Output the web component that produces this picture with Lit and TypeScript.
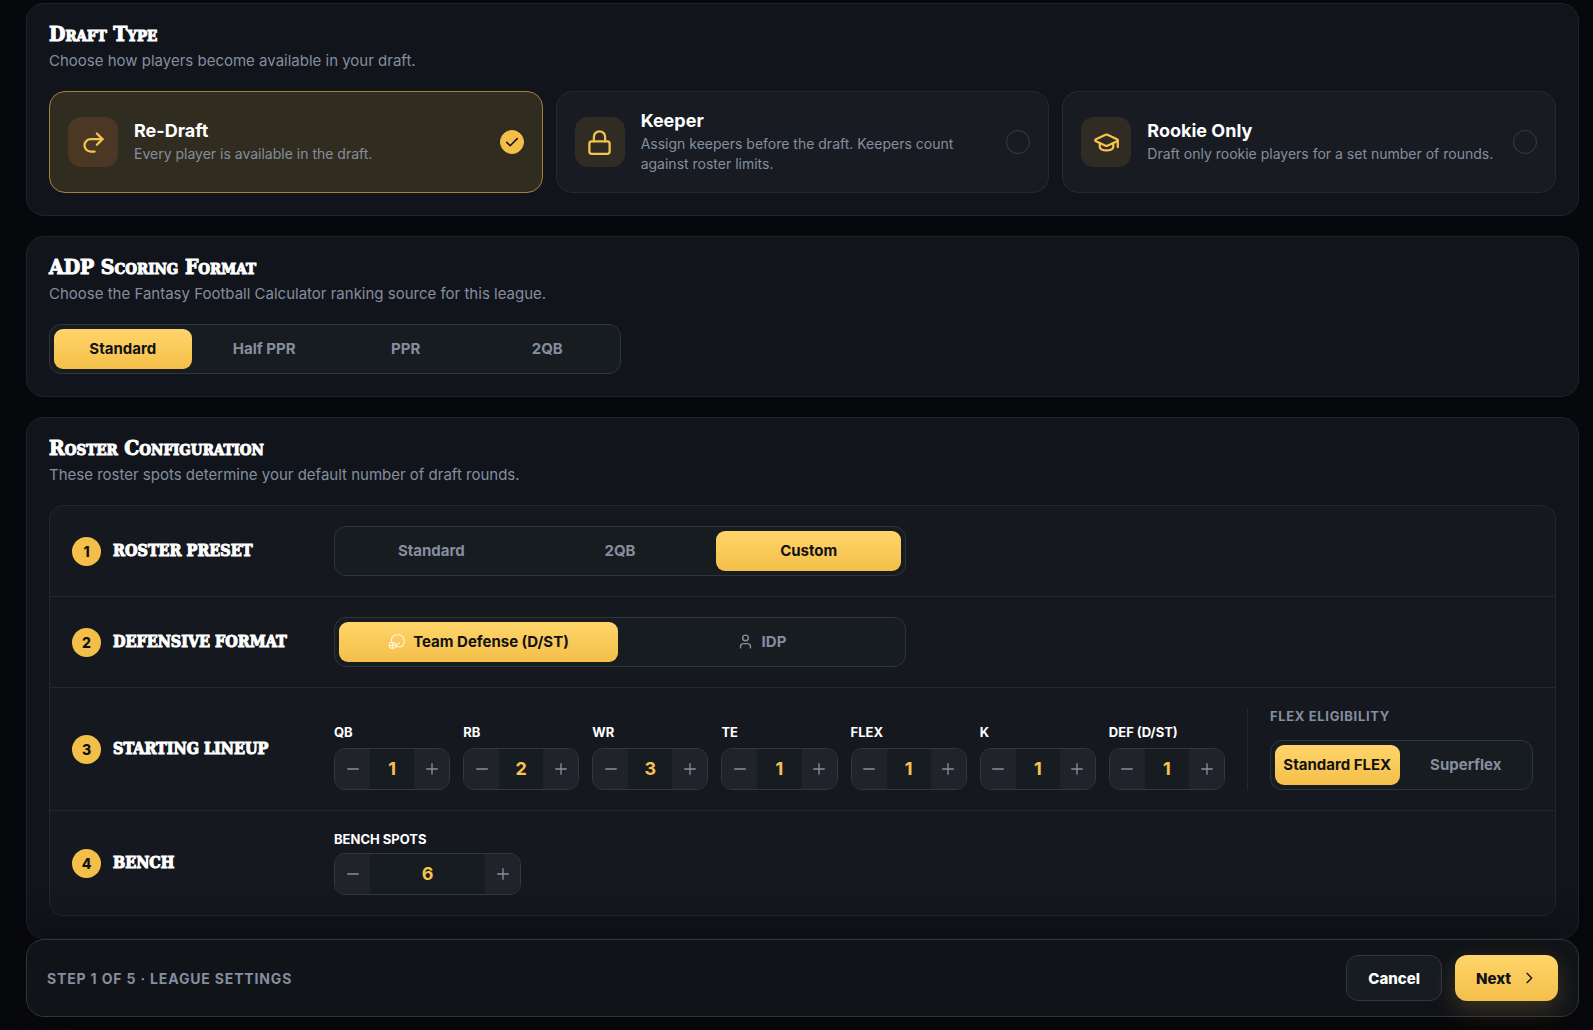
import { LitElement, html, svg, css } from "lit";
import { customElement, property, state } from "lit/decorators.js";
import { classMap } from "lit/directives/class-map.js";

const icons = {
  redo: svg`<path d="m15 14 5-5-5-5"/><path d="M20 9H9.5A5.5 5.5 0 0 0 4 14.5 5.5 5.5 0 0 0 9.5 20H13"/>`,
  lock: svg`<rect x="3" y="11" width="18" height="11" rx="2"/><path d="M7 11V7a5 5 0 0 1 10 0v4"/>`,
  cap: svg`<path d="M21.42 10.922a1 1 0 0 0-.019-1.838L12.83 5.18a2 2 0 0 0-1.66 0L2.6 9.08a1 1 0 0 0 0 1.832l8.57 3.908a2 2 0 0 0 1.66 0z"/><path d="M22 10v6"/><path d="M6 12.5V16a6 3 0 0 0 12 0v-3.5"/>`,
  check: svg`<path d="m5 12.5 4.5 4.5L19 7.5"/>`,
  user: svg`<path d="M19 21v-2a4 4 0 0 0-4-4H9a4 4 0 0 0-4 4v2"/><circle cx="12" cy="7" r="4"/>`,
  helmet: svg`<path d="M5 13C3.500 6.500 8 2 13.500 2 19 2 23 6 23 11c0 4-1.500 6.500-4 8.500h-5L11.500 15 5 13z"/><path d="M5 13 2 14.500V20l3.500 2 5.500-1.500 2-2.500"/><path d="M2 17.500h9.500"/><path d="M6.500 14v7.500"/><circle cx="15.500" cy="14.500" r=".8"/>`,
  chevron: svg`<path d="m9 5 7 7-7 7"/>`,
  minus: svg`<path d="M4 12h16"/>`,
  plus: svg`<path d="M4 12h16M12 4v16"/>`,
};
type IconName = keyof typeof icons;

const icon = (name: IconName, cls: string) =>
  html`<svg class=${cls} viewBox="0 0 24 24" fill="none" stroke="currentColor"
    stroke-linecap="round" stroke-linejoin="round" aria-hidden="true">${icons[name]}</svg>`;

interface Choice {
  label: string;
  icon?: IconName;
}

const reset = css`
  *, *::before, *::after { box-sizing: border-box; }
  button, input { font: inherit; color: inherit; margin: 0; }
  button { cursor: pointer; }
`;

@customElement("segmented-control")
class SegmentedControl extends LitElement {
  @property() label = "";
  @property({ attribute: false }) choices: Choice[] = [];
  @property({ type: Number }) selected = 0;

  static styles = [reset, css`
    :host { display: block; }
    .track {
      display: grid;
      grid-auto-flow: column;
      grid-auto-columns: minmax(0, 1fr);
      gap: 4px;
      padding: 4px;
      border: 1px solid #313539;
      border-radius: 12px;
      background: #171c21;
    }
    .segment {
      display: flex;
      align-items: center;
      justify-content: center;
      gap: 8px;
      height: 40px;
      padding: 0 0 2px;
      border: 0;
      border-radius: 9px;
      background: none;
      color: #858e9e;
      font-size: 15px;
      font-weight: 700;
      white-space: nowrap;
    }
    .selected {
      background: linear-gradient(#ffd56a, #f4bf49);
      color: #111216;
    }
    .glyph { width: 17px; height: 17px; stroke-width: 2; }
    .selected .glyph { color: #fff6dc; stroke-width: 1.5; }
  `];

  render() {
    return html`<div class="track" role="group" aria-label=${this.label}>
      ${this.choices.map((c, i) => html`
        <button type="button" class=${classMap({ segment: true, selected: i === this.selected })}
          aria-pressed=${i === this.selected ? "true" : "false"}
          @click=${() => (this.selected = i)}>${c.icon ? icon(c.icon, "glyph") : null}${c.label}</button>`)}
    </div>`;
  }
}

@customElement("number-stepper")
class NumberStepper extends LitElement {
  @property() label = "";
  @property({ type: Number }) value = 0;
  @property({ type: Boolean, reflect: true }) compact = false;

  static styles = [reset, css`
    :host { display: flex; flex-direction: column; gap: 8px; }
    :host([compact]) { gap: 6px; }
    .name {
      color: #fff;
      font-size: 13px;
      line-height: 16px;
      font-weight: 700;
      white-space: nowrap;
    }
    .box {
      display: grid;
      grid-template-columns: 35px minmax(0, 1fr) 35px;
      height: 42px;
      overflow: hidden;
      border: 1px solid #33373b;
      border-radius: 11px;
      background: #171c21;
    }
    .step {
      display: grid;
      place-items: center;
      padding: 0;
      border: 0;
      background: #20242a;
      color: #858e9e;
    }
    .sign { width: 16px; height: 16px; stroke-width: 2; }
    .value {
      width: 100%;
      padding: 0 0 2px;
      border: 0;
      background: none;
      color: #f6c34d;
      font-size: 18px;
      font-weight: 700;
      text-align: center;
    }
  `];

  private change(by: number) {
    this.value = Math.max(0, this.value + by);
  }

  render() {
    return html`
      <label class="name" for="value">${this.label}</label>
      <div class="box">
        <button class="step" type="button" aria-label="Decrease ${this.label}" @click=${() => this.change(-1)}>${icon("minus", "sign")}</button>
        <input class="value" id="value" type="text" inputmode="numeric" .value=${String(this.value)} />
        <button class="step" type="button" aria-label="Increase ${this.label}" @click=${() => this.change(1)}>${icon("plus", "sign")}</button>
      </div>`;
  }
}

const draftTypes: { title: string; text: string; icon: IconName }[] = [
  { title: "Re-Draft", text: "Every player is available in the draft.", icon: "redo" },
  { title: "Keeper", text: "Assign keepers before the draft. Keepers count against roster limits.", icon: "lock" },
  { title: "Rookie Only", text: "Draft only rookie players for a set number of rounds.", icon: "cap" },
];

const lineup: [string, number][] = [
  ["QB", 1], ["RB", 2], ["WR", 3], ["TE", 1], ["FLEX", 1], ["K", 1], ["DEF (D/ST)", 1],
];

const scoring: Choice[] = [{ label: "Standard" }, { label: "Half PPR" }, { label: "PPR" }, { label: "2QB" }];
const presets: Choice[] = [{ label: "Standard" }, { label: "2QB" }, { label: "Custom" }];
const defenses: Choice[] = [{ label: "Team Defense (D/ST)", icon: "helmet" }, { label: "IDP", icon: "user" }];
const flexRules: Choice[] = [{ label: "Standard FLEX" }, { label: "Superflex" }];

@customElement("app-root")
class AppRoot extends LitElement {
  @state() private draftType = 0;

  static styles = [reset, css`
    :host {
      display: block;
      min-height: 100vh;
      background: #07080c;
      color: #fff;
      font-family: Inter, "Liberation Sans", sans-serif;
    }
    .page { padding: 3px 14px 13px 26px; }
    .sections { display: flex; flex-direction: column; gap: 20px; }
    .card {
      padding: 20px 22px 22px;
      border: 1px solid #20242a;
      border-radius: 18px;
      background: #11141b;
    }
    .title {
      margin: 0;
      font-family: "DejaVu Serif Condensed", "DejaVu Serif", serif;
      font-size: 21px;
      line-height: 20px;
      font-weight: 700;
      font-variant: small-caps;
      -webkit-text-stroke: 1px currentColor;
    }
    .subtitle {
      margin: 6px 0 19px;
      color: #858e9e;
      font-size: 15px;
      line-height: 22px;
    }
    .options {
      display: grid;
      grid-template-columns: repeat(3, minmax(0, 1fr));
      gap: 13px;
      margin: 0;
      padding: 0;
      border: 0;
    }
    .option {
      display: flex;
      align-items: center;
      gap: 16px;
      padding: 18px;
      border: 1px solid #252a2f;
      border-radius: 16px;
      background: #181c22;
      cursor: pointer;
    }
    .option.chosen { border-color: #a5823a; background: #312c20; }
    .tile {
      flex: none;
      display: grid;
      place-items: center;
      width: 50px;
      height: 50px;
      border-radius: 13px;
      background: #302c24;
      color: #f6c34d;
    }
    .chosen .tile { background: #4b3824; }
    .tile-icon { width: 27px; height: 27px; stroke-width: 2; }
    .option-text { flex: 1; min-width: 0; display: flex; flex-direction: column; gap: 2px; }
    .option-title { font-size: 18px; line-height: 22px; font-weight: 700; }
    .option-note { color: #858e9e; font-size: 14px; line-height: 20px; }
    .mark { flex: none; display: grid; place-items: center; }
    .radio {
      grid-area: 1 / 1;
      appearance: none;
      width: 24px;
      height: 24px;
      border: 1px solid #3a3e43;
      border-radius: 50%;
    }
    .radio:checked { border-color: #f4bf49; background: #f4bf49; }
    .tick { grid-area: 1 / 1; width: 18px; height: 18px; stroke-width: 2; color: #111216; pointer-events: none; }
    .limited { max-width: 572px; }
    .panel {
      border: 1px solid #24282d;
      border-radius: 14px;
      background: #15181f;
    }
    .row {
      display: grid;
      grid-template-columns: 240px minmax(0, 1fr);
      align-items: center;
      gap: 22px;
      padding: 20px 22px;
    }
    .row + .row { border-top: 1px solid #24282d; }
    .row-head { display: flex; align-items: center; gap: 12px; }
    .number {
      flex: none;
      display: grid;
      place-items: center;
      width: 29px;
      height: 29px;
      border-radius: 50%;
      background: #f4bf49;
      color: #111216;
      font-size: 14px;
      font-weight: 800;
    }
    .row-title {
      margin: 0;
      font-family: "DejaVu Serif Condensed", "DejaVu Serif", serif;
      font-size: 16px;
      line-height: 20px;
      font-weight: 700;
      text-transform: uppercase;
      white-space: nowrap;
      -webkit-text-stroke: 1px currentColor;
    }
    .lineup { display: flex; align-items: flex-end; gap: 22px; }
    .steppers { flex: 1; display: grid; grid-template-columns: repeat(7, minmax(0, 1fr)); gap: 13px; }
    .flex-rules {
      flex: none;
      display: flex;
      flex-direction: column;
      gap: 16px;
      width: 286px;
      padding-left: 22px;
      border-left: 1px solid #24282d;
    }
    .caption {
      color: #858e9e;
      font-size: 13px;
      line-height: 16px;
      font-weight: 700;
      letter-spacing: 0.05em;
      text-transform: uppercase;
    }
    .bench { width: 187px; }
    .footer {
      position: relative;
      display: flex;
      align-items: center;
      gap: 13px;
      padding: 15px 20px;
      border: 1px solid #303438;
      border-radius: 18px;
      background: #101318;
      box-shadow: 0 0 40px rgba(10, 10, 10, 0.9);
    }
    .step-label {
      flex: 1;
      color: #858e9e;
      font-size: 14px;
      font-weight: 700;
      letter-spacing: 0.06em;
      text-transform: uppercase;
    }
    .action {
      display: flex;
      align-items: center;
      gap: 10px;
      height: 46px;
      padding: 0 21px;
      border: 1px solid #33373b;
      border-radius: 12px;
      background: #171b22;
      font-size: 15px;
      font-weight: 800;
    }
    .primary {
      border: 0;
      background: linear-gradient(#ffd56a, #f4bf49);
      color: #111216;
      box-shadow: 0 8px 24px rgba(244, 191, 73, 0.2);
    }
    .next-icon { width: 16px; height: 16px; stroke-width: 2; }
  `];

  private row(n: number, title: string, body: unknown) {
    return html`<div class="row">
      <div class="row-head"><span class="number">${n}</span><h3 class="row-title">${title}</h3></div>
      ${body}
    </div>`;
  }

  private heading(title: string, note: string) {
    return html`<h2 class="title">${title}</h2><p class="subtitle">${note}</p>`;
  }

  render() {
    return html`<main class="page">
      <div class="sections">
        <section class="card">
          ${this.heading("Draft Type", "Choose how players become available in your draft.")}
          <fieldset class="options" aria-label="Draft Type">
            ${draftTypes.map((t, i) => html`
              <label class=${classMap({ option: true, chosen: i === this.draftType })}>
                <span class="tile">${icon(t.icon, "tile-icon")}</span>
                <span class="option-text">
                  <span class="option-title">${t.title}</span>
                  <span class="option-note">${t.text}</span>
                </span>
                <span class="mark">
                  <input class="radio" type="radio" name="draft-type" .checked=${i === this.draftType}
                    @change=${() => (this.draftType = i)} />
                  ${i === this.draftType ? icon("check", "tick") : null}
                </span>
              </label>`)}
          </fieldset>
        </section>

        <section class="card">
          ${this.heading("ADP Scoring Format", "Choose the Fantasy Football Calculator ranking source for this league.")}
          <segmented-control class="limited" label="ADP Scoring Format" .choices=${scoring}></segmented-control>
        </section>

        <section class="card">
          ${this.heading("Roster Configuration", "These roster spots determine your default number of draft rounds.")}
          <div class="panel">
            ${this.row(1, "Roster Preset", html`
              <segmented-control class="limited" label="Roster Preset" .choices=${presets} .selected=${2}></segmented-control>`)}
            ${this.row(2, "Defensive Format", html`
              <segmented-control class="limited" label="Defensive Format" .choices=${defenses}></segmented-control>`)}
            ${this.row(3, "Starting Lineup", html`
              <div class="lineup">
                <div class="steppers">
                  ${lineup.map(([name, count]) => html`<number-stepper label=${name} .value=${count}></number-stepper>`)}
                </div>
                <div class="flex-rules">
                  <span class="caption">Flex Eligibility</span>
                  <segmented-control label="Flex Eligibility" .choices=${flexRules}></segmented-control>
                </div>
              </div>`)}
            ${this.row(4, "Bench", html`
              <number-stepper class="bench" compact label="BENCH SPOTS" .value=${6}></number-stepper>`)}
          </div>
        </section>
      </div>

      <footer class="footer">
        <span class="step-label">Step 1 of 5 · League Settings</span>
        <button class="action" type="button">Cancel</button>
        <button class="action primary" type="button">Next ${icon("chevron", "next-icon")}</button>
      </footer>
    </main>`;
  }
}
